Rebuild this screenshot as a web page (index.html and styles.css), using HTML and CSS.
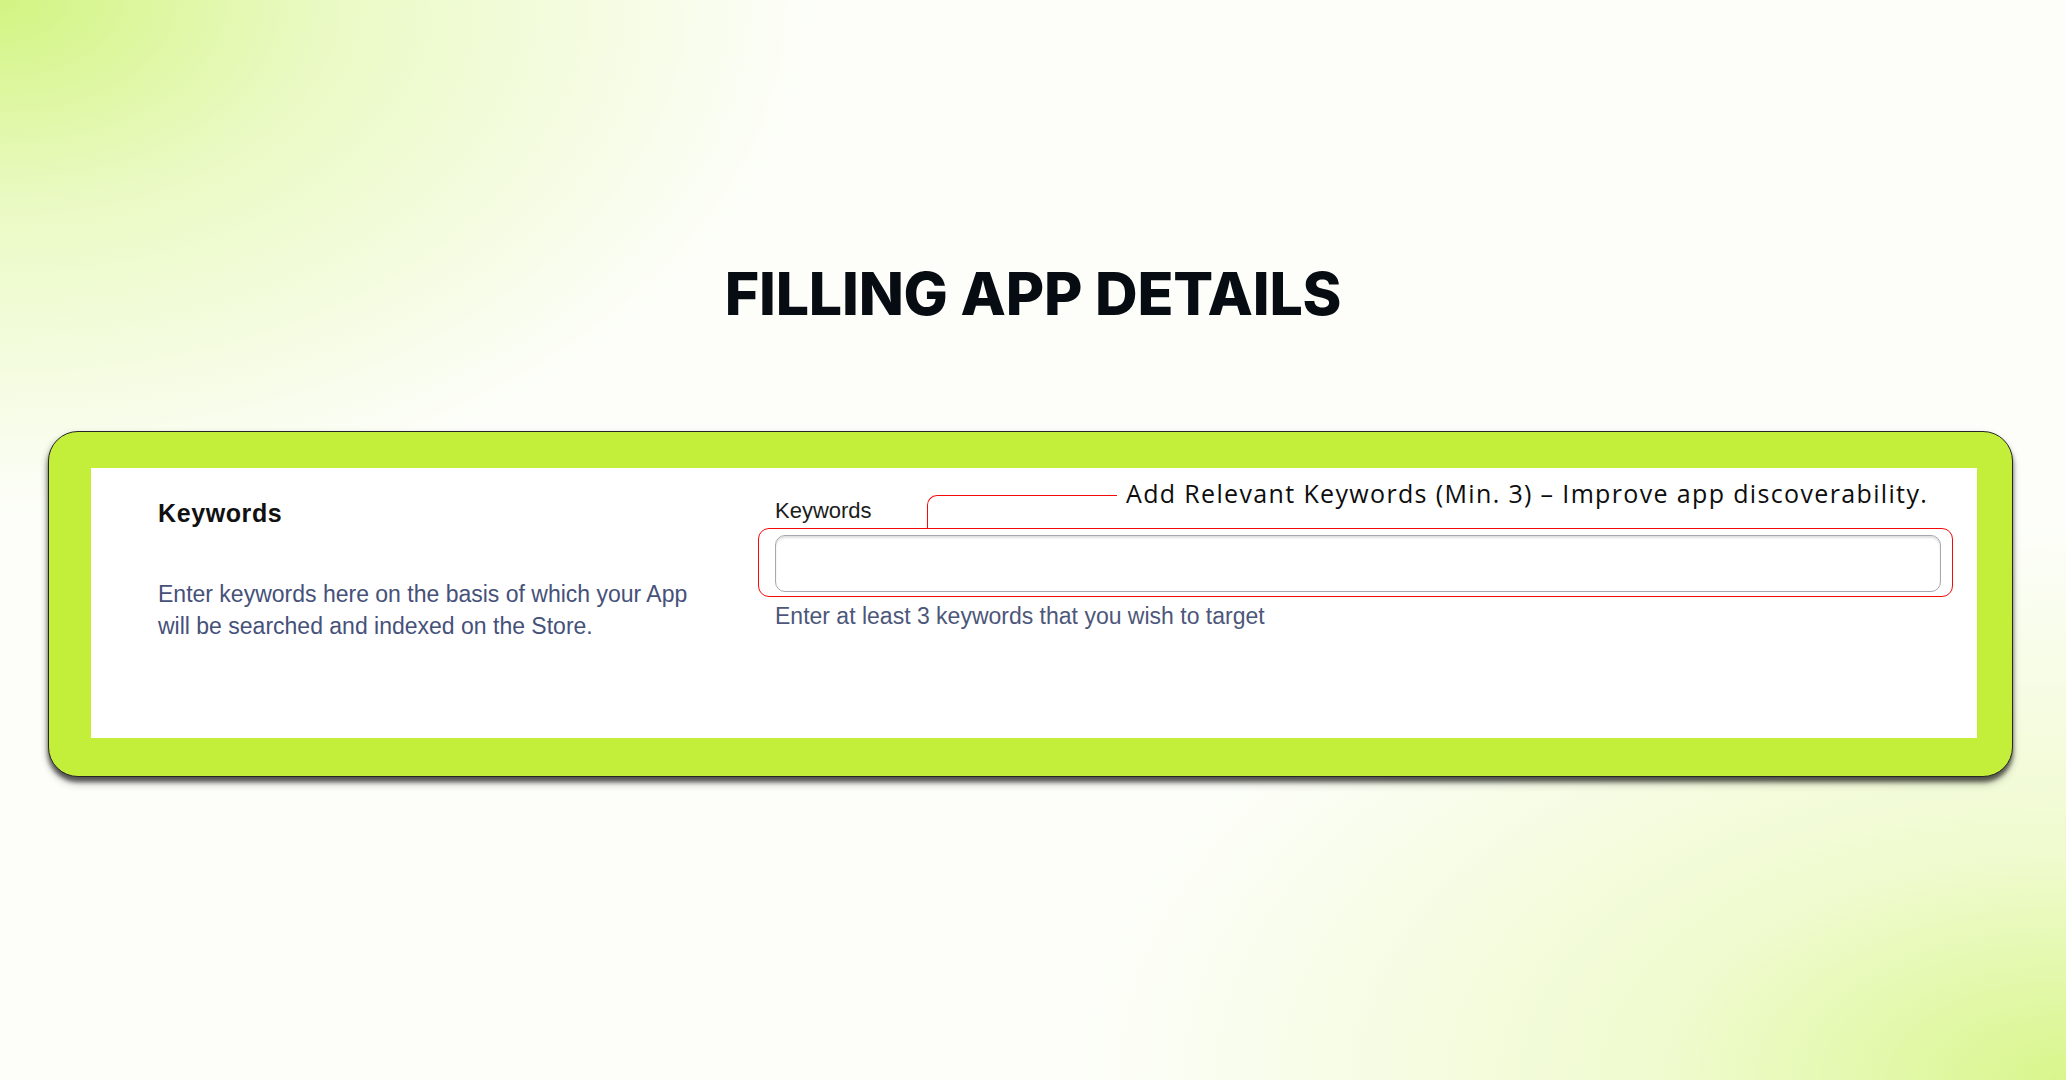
FILE: index.html
```html
<!DOCTYPE html>
<html lang="en">
<head>
<meta charset="utf-8">
<title>Filling App Details</title>
<link rel="stylesheet" href="styles.css">
</head>
<body>
<main class="page">
  <h1 class="title">FILLING APP DETAILS</h1>
  <section class="card">
    <div class="panel">
      <div class="info">
        <h2 class="info-title">Keywords</h2>
        <p class="info-text">Enter keywords here on the basis of which your App will be searched and indexed on the Store.</p>
      </div>
      <div class="field">
        <label class="field-label" for="kw">Keywords</label>
        <div class="highlight">
          <input class="field-input" id="kw" type="text">
        </div>
        <p class="field-help">Enter at least 3 keywords that you wish to target</p>
        <span class="callout-line"></span>
        <span class="callout-text">Add Relevant Keywords (Min. 3) – Improve app discoverability.</span>
      </div>
    </div>
  </section>
</main>
</body>
</html>
```
FILE: styles.css
```css
html, body {
  margin: 0;
  padding: 0;
}
body {
  width: 2066px;
  height: 1080px;
  overflow: hidden;
  font-family: "Liberation Sans", Arial, sans-serif;
  background:
    radial-gradient(ellipse 820px 520px at 0 0, rgba(210, 244, 130, 1) 0%, rgba(222, 247, 160, 0.6) 40%, rgba(253, 254, 248, 0) 100%),
    radial-gradient(ellipse 1000px 560px at 100% 100%, rgba(216, 246, 140, 1) 0%, rgba(228, 248, 170, 0.55) 40%, rgba(253, 254, 248, 0) 100%),
    #fdfefa;
}
.page {
  display: flex;
  flex-direction: column;
  align-items: flex-start;
  padding-top: 264px;
}
.title {
  align-self: center;
  margin: 0;
  font-family: Inter, "Noto Sans", sans-serif;
  font-weight: 800;
  font-size: 59px;
  line-height: 59px;
  color: #070b12;
  letter-spacing: -0.2px;
}
.card {
  margin: 108px 0 0 48px;
  width: 1965px;
  box-sizing: border-box;
  padding: 36px 35px 38px 42px;
  background: #c3ef3b;
  border: 1.5px solid #262626;
  border-radius: 30px;
  box-shadow: 0 5px 4px rgba(0, 0, 0, 0.55), 0 7px 8px rgba(0, 0, 0, 0.2), -2px 2px 6px rgba(0, 0, 0, 0.12);
}
.panel {
  background: #ffffff;
  height: 270px;
  box-sizing: border-box;
  padding: 30px 36px 0 67px;
  display: flex;
}
.info {
  width: 617px;
  flex: none;
}
.info-title {
  margin: 0;
  font-size: 25px;
  line-height: 30px;
  font-weight: 700;
  color: #111111;
  letter-spacing: 0.6px;
}
.info-text {
  margin: 50px 0 0;
  font-size: 23px;
  line-height: 32px;
  color: #46517a;
  width: 560px;
}
.field {
  position: relative;
  flex: 1;
}
.field-label {
  display: block;
  font-size: 22px;
  line-height: 26px;
  color: #1c1c1c;
}
.highlight {
  margin: 4px -12px 0 -17px;
  padding: 6px 11px 4px 16px;
  border: 1.5px solid #f50a0a;
  border-radius: 11px;
}
.field-input {
  display: block;
  width: 100%;
  height: 57px;
  box-sizing: border-box;
  margin: 0;
  border: 1.5px solid #a8a8b0;
  border-radius: 10px;
  background: #ffffff;
  box-shadow: inset 0 2px 2px rgba(0, 0, 0, 0.12);
  outline: none;
}
.field-help {
  margin: 5px 0 0;
  font-size: 23px;
  line-height: 28px;
  color: #4d577a;
}
.callout-line {
  position: absolute;
  left: 152px;
  top: -3px;
  width: 190px;
  height: 33px;
  box-sizing: border-box;
  border-top: 1.5px solid #f50a0a;
  border-left: 1.5px solid #f50a0a;
  border-top-left-radius: 10px;
}
.callout-text {
  position: absolute;
  left: 351px;
  top: -20px;
  white-space: nowrap;
  font-family: "Open Sans", "Noto Sans", sans-serif;
  font-size: 25px;
  line-height: 30px;
  letter-spacing: 1.35px;
  color: #0d0d0d;
}
```
